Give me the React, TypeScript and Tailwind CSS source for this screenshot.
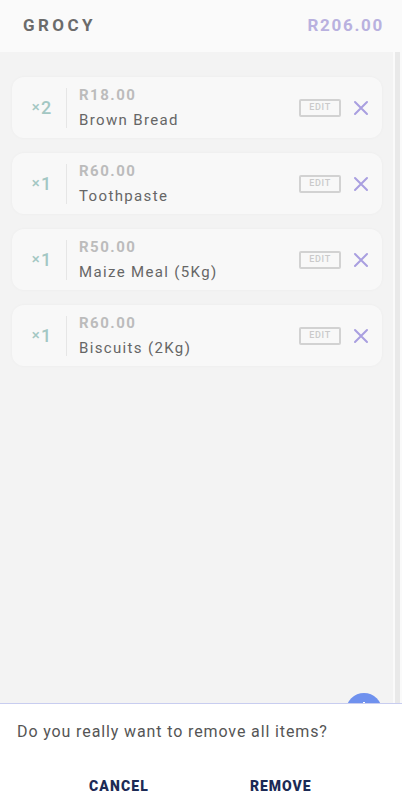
const items = [
  { qty: 2, price: "R18.00", name: "Brown Bread" },
  { qty: 1, price: "R60.00", name: "Toothpaste" },
  { qty: 1, price: "R50.00", name: "Maize Meal (5Kg)" },
  { qty: 1, price: "R60.00", name: "Biscuits (2Kg)" },
];

export default function App() {
  return (
    <div
      className="relative flex h-[800px] w-[402px] flex-col overflow-hidden bg-[#f3f3f3]"
      style={{ fontFamily: "Roboto, 'Liberation Sans', sans-serif" }}
    >
      {/* Header */}
      <header className="flex h-[52px] items-center justify-between bg-[#fafafa] pl-[23px] pr-[18px]">
        <h1 className="text-[17px] font-bold tracking-[0.2em] text-[#6b6b6b]">GROCY</h1>
        <span className="text-[17px] font-bold tracking-[0.1em] text-[#b9b1df]">R206.00</span>
      </header>

      {/* List */}
      <div className="flex flex-1">
        <div className="flex flex-1 flex-col gap-[15px] pl-[12px] pr-[11px] pt-[25px]">
          {items.map((item, i) => (
            <div
              key={i}
              className="flex h-[61px] items-center rounded-[12px] bg-[#f8f8f8] shadow-[0_0_3px_rgba(0,0,0,0.04)]"
            >
              <div className="flex w-[54px] items-center justify-center pl-[6px] text-[18px] font-medium tracking-[0.06em] text-[#a3c7c3]">
                <span className="text-[15px]">×</span>
                {item.qty}
              </div>
              <div className="h-[40px] w-px bg-[#e6e6e6]" />
              <div className="flex flex-1 flex-col pl-[12px]">
                <span className="text-[15px] font-bold leading-[20px] tracking-[0.1em] text-[#bcbcbc]">
                  {item.price}
                </span>
                <span className="mt-[5px] text-[15px] leading-[20px] tracking-[0.09em] text-[#666]">
                  {item.name}
                </span>
              </div>
              <div className="flex h-[18px] w-[42px] items-center justify-center rounded-[2px] border-2 border-[#d2d2d2] text-[9px] font-medium tracking-[0.08em] text-[#cacaca]">
                EDIT
              </div>
              <svg className="ml-[12px] mr-[13px]" width="16" height="16" viewBox="0 0 16 16">
                <path d="M2 2L14 14M14 2L2 14" stroke="#a99fe0" strokeWidth="2" strokeLinecap="round" />
              </svg>
            </div>
          ))}
        </div>
        {/* Scrollbar */}
        <div className="w-[9px] border-x-2 border-[#fafafa] bg-[#e9e9e9]" />
      </div>

      {/* FAB (partly hidden) */}
      <div className="absolute left-[346px] top-[693px] flex h-[36px] w-[36px] justify-center rounded-full bg-[#6f91ee]">
        <div className="mt-[9px] h-[6px] w-[2px] bg-white" />
      </div>

      {/* Bottom sheet */}
      <div className="absolute bottom-0 left-0 h-[97px] w-full border-t border-[#c8cdf0] bg-white">
        <p className="mt-[16px] pl-[17px] text-[16px] tracking-[0.055em] text-[#555]">
          Do you really want to remove all items?
        </p>
        <div className="mt-[32px] flex">
          <button className="ml-[89px] text-[14px] font-black tracking-[0.08em] text-[#1c2a55]">CANCEL</button>
          <button className="ml-[101px] text-[14px] font-black tracking-[0.07em] text-[#1c2a55]">REMOVE</button>
        </div>
      </div>
    </div>
  );
}
